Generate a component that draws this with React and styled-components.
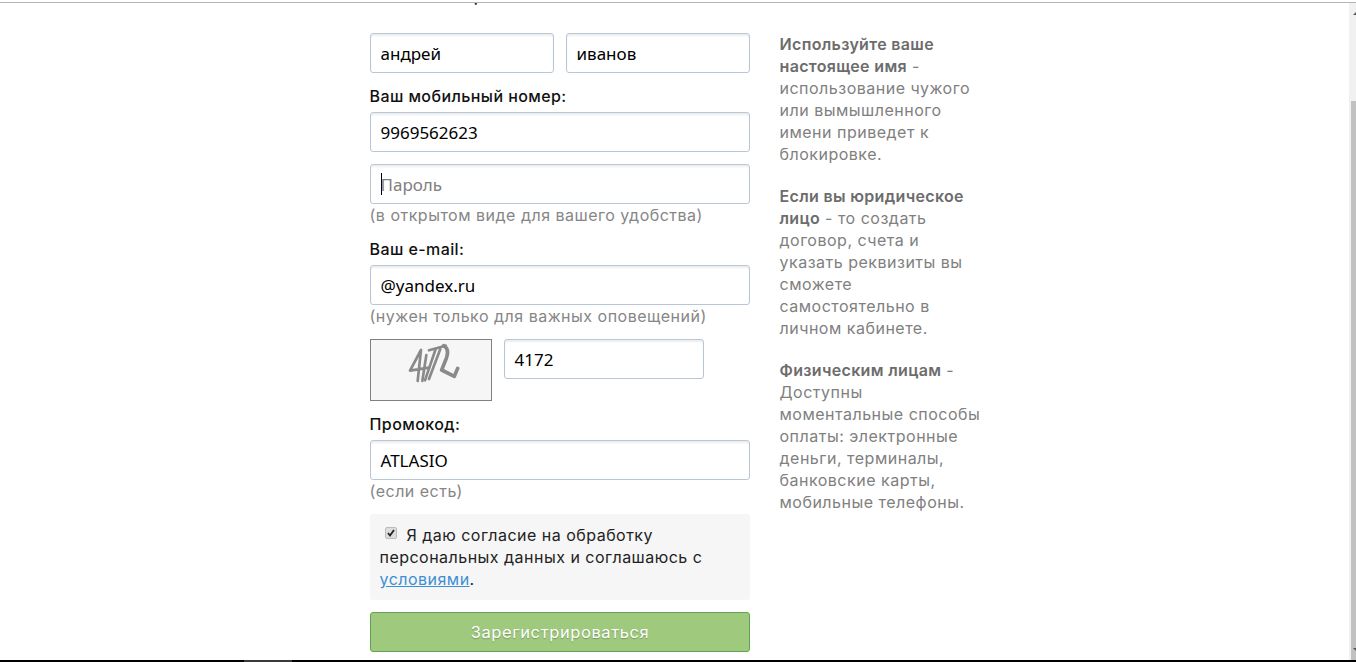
import React from "react";
import styled, { createGlobalStyle } from "styled-components";

const Global = createGlobalStyle`
  html, body { margin: 0; padding: 0; height: 100%; overflow: hidden; background: #fff; }
  #root { height: 100%; }
`;

const font = `Inter, "Noto Sans", sans-serif`;
const fieldFont = `"Noto Sans", "Open Sans", sans-serif`;

const Viewport = styled.div`
  width: 1356px;
  height: 662px;
  overflow: hidden;
  display: flex;
  flex-direction: column;
  font-family: ${font};
`;
const TopLine = styled.div`
  flex: none;
  height: 1px;
  margin-top: 2px;
  background: #b4b4b4;
`;
const Body = styled.div`
  flex: 1;
  min-height: 0;
  display: flex;
  overflow: hidden;
`;
const BottomBar = styled.div`
  flex: none;
  height: 2px;
  background: #000;
  display: flex;
`;
const BottomTab = styled.div`
  width: 48px;
  margin-left: 244px;
  background: #3a3a3a;
`;
const Page = styled.div`
  flex: 1;
  display: flex;
  gap: 30px;
  padding-left: 370px;
  align-items: flex-start;
`;
const Form = styled.form`
  width: 380px;
  display: flex;
  flex-direction: column;
  margin-top: -18px;
`;
const Label = styled.label`
  font-size: 16px;
  font-weight: 500;
  line-height: 22px;
  letter-spacing: 0.42px;
  color: #111;
  display: block;
  margin: 0 0 5px -0.5px;
`;
const HeadLabel = styled(Label)`
  margin-bottom: 26px;
`;
const Row = styled.div`
  display: flex;
  gap: 12px;
`;
const Input = styled.div`
  box-sizing: border-box;
  flex: ${(p) => (p.$half ? "1" : "none")};
  width: ${(p) => (p.$w ? `${p.$w}px` : "auto")};
  height: 40px;
  border: 1px solid #b9c6d6;
  border-radius: 3px;
  padding: 0 9.5px;
  display: flex;
  align-items: center;
  font-family: ${fieldFont};
  font-size: 17px;
  color: #000;
  background: #fff;
  box-shadow: inset 0 2px 2px rgba(0, 0, 0, 0.07);
`;
const Placeholder = styled.span`
  color: #808080;
`;
const Caret = styled.span`
  width: 1px;
  height: 22px;
  background: #000;
  margin-right: -1px;
`;
const Hint = styled.div`
  font-size: 16px;
  line-height: 22px;
  letter-spacing: 0.5px;
  color: #868686;
  margin-left: -0.5px;
`;
const Gap = styled.div`
  height: ${(p) => p.$h}px;
`;
const Captcha = styled.div`
  box-sizing: border-box;
  width: 122px;
  height: 62px;
  border: 1px solid #808080;
  background: #f6f6f6;
  & svg { display: block; filter: blur(0.6px); }
`;
const Consent = styled.div`
  background: #f6f6f6;
  border-radius: 3px;
  padding: 10px 10px 10px 9.5px;
  font-size: 16px;
  line-height: 22px;
  letter-spacing: 0.48px;
  color: #222;
`;
const Check = styled.span`
  display: inline-block;
  width: 12px;
  height: 12px;
  margin: 0 10px 0 5px;
  background: #ddd;
  border: 1px solid #bbb;
  border-radius: 2px;
  box-sizing: border-box;
  vertical-align: 2px;
  & svg { display: block; }
`;
const Link = styled.a`
  color: #3b8fd4;
  text-decoration: underline;
`;
const Submit = styled.button`
  height: 40px;
  margin-top: 12px;
  border: 1px solid #5fa555;
  border-radius: 3px;
  background: #9fc97d;
  color: #fff;
  font-family: ${font};
  font-size: 16.5px;
  letter-spacing: 0.6px;
  text-shadow: 0 1px 1px rgba(0, 0, 0, 0.25);
`;
const Aside = styled.aside`
  width: 204px;
  margin: 30px 0 0 -0.5px;
  font-size: 16px;
  line-height: 22px;
  letter-spacing: 0.5px;
  color: #808080;
`;
const Para = styled.p`
  margin: 0 0 20px;
`;
const Strong = styled.span`
  color: #6c6c6c;
  font-weight: 600;
  letter-spacing: 0.33px;
`;
const Scrollbar = styled.div`
  flex: none;
  width: 7px;
  background: #f1f1f1;
  position: relative;
`;
const Thumb = styled.div`
  position: absolute;
  right: 0;
  top: 98px;
  bottom: 0;
  width: 5px;
  background: #c1c1c1;
`;
const Arrow = styled.div`
  position: absolute;
  right: 0;
  ${(p) => (p.$up ? "top: 9px;" : "bottom: 9px;")}
  width: 0;
  height: 0;
  border-left: 3px solid transparent;
  border-right: 0;
  ${(p) => (p.$up ? "border-bottom: 3px solid #555;" : "border-top: 3px solid #555;")}
`;

export default function App() {
  return (
    <Viewport>
      <Global />
      <TopLine />
      <Body>
        <Page>
          <Form>
            <HeadLabel>Ваше имя и фамилия</HeadLabel>
            <Row>
              <Input $half>андрей</Input>
              <Input $half>иванов</Input>
            </Row>
            <Gap $h={12} />
            <Label>Ваш мобильный номер:</Label>
            <Input>9969562623</Input>
            <Gap $h={12} />
            <Input><Caret /><Placeholder>Пароль</Placeholder></Input>
            <Hint>(в открытом виде для вашего удобства)</Hint>
            <Gap $h={12} />
            <Label>Ваш e-mail:</Label>
            <Input>@yandex.ru</Input>
            <Hint>(нужен только для важных оповещений)</Hint>
            <Gap $h={12} />
            <Row>
              <Captcha>
                <svg width="120" height="60" viewBox="18 15 360 180" fill="none" stroke="#8a8a8a" strokeWidth="8" strokeLinejoin="round" strokeLinecap="round">
                  <path d="M168 45 L135 107 L192 98 M168 45 L158 138 M184 60 L172 138" />
                  <path d="M192 46 L242 32 M212 42 L180 136 M226 42 L192 132" />
                  <path d="M236 32 Q254 42 244 70 L230 105 L268 124 L278 100" strokeWidth="11" />
                </svg>
              </Captcha>
              <Input $w={200}>4172</Input>
            </Row>
            <Gap $h={12} />
            <Label>Промокод:</Label>
            <Input>ATLASIO</Input>
            <Hint>(если есть)</Hint>
            <Gap $h={12} />
            <Consent>
              <Check>
                <svg width="10" height="10" viewBox="0 0 10 10"><path d="M2 5 L4 7.5 L8 2" fill="none" stroke="#222" strokeWidth="1.8" /></svg>
              </Check>
              Я даю согласие на обработку персональных данных и соглашаюсь с <Link href="#">условиями</Link>.
            </Consent>
            <Submit type="button">Зарегистрироваться</Submit>
          </Form>
          <Aside>
            <Para><Strong>Используйте ваше настоящее имя</Strong> - использование чужого или вымышленного имени приведет к блокировке.</Para>
            <Para><Strong>Если вы юридическое лицо</Strong> - то создать договор, счета и указать реквизиты вы сможете самостоятельно в личном кабинете.</Para>
            <Para><Strong>Физическим лицам</Strong> - Доступны моментальные способы оплаты: электронные деньги, терминалы, банковские карты, мобильные телефоны.</Para>
          </Aside>
        </Page>
        <Scrollbar>
          <Arrow $up />
          <Thumb />
          <Arrow />
        </Scrollbar>
      </Body>
      <BottomBar><BottomTab /></BottomBar>
    </Viewport>
  );
}
